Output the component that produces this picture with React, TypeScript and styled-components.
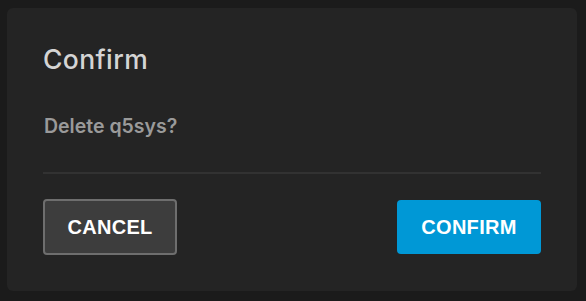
import React from 'react';
import styled, { createGlobalStyle } from 'styled-components';

const GlobalStyle = createGlobalStyle`
    html, body {
        margin: 0;
        padding: 0;
        background: #1b1b1b;
    }
    body {
        font-family: Inter, "Noto Sans", sans-serif;
    }
`

const Page = styled.div`
    width: 586px;
    height: 301px;
    padding: 8px 9px 10px 7px;
    box-sizing: border-box;
`

const Dialog = styled.div`
    width: 570px;
    height: 283px;
    box-sizing: border-box;
    background: #242424;
    border-radius: 6px;
    padding: 36px 36px 0 36px;
    display: flex;
    flex-direction: column;
`

const Title = styled.h2`
    margin: 0;
    font-size: 26.5px;
    line-height: 30px;
    font-weight: 500;
    color: #d4d4d4;
    letter-spacing: 0.4px;
`

const Message = styled.p`
    margin: 41px 0 0 1px;
    font-size: 19.5px;
    line-height: 22px;
    font-weight: 600;
    color: #9a9a9a;
`

const Divider = styled.hr`
    margin: 35px 0 0 0;
    border: none;
    height: 2px;
    background: #323232;
`

const Actions = styled.div`
    display: flex;
    justify-content: space-between;
    align-items: center;
    margin-top: 25px;
`

const Button = styled.button<{ $primary?: boolean }>`
    font-family: "Liberation Sans", Arial, sans-serif;
    font-size: 20px;
    font-weight: 700;
    letter-spacing: 0.3px;
    color: #ffffff;
    border-radius: 4px;
    cursor: pointer;
    box-sizing: border-box;
    width: ${p => p.$primary ? '144px' : '134px'};
    height: ${p => p.$primary ? '54px' : '56px'};
    background: ${p => p.$primary ? '#0098d6' : '#3d3d3d'};
    border: ${p => p.$primary ? 'none' : '2px solid #6e6e6e'};
`

export default function App() {
    return (
        <>
            <GlobalStyle />
            <Page>
                <Dialog>
                    <Title>Confirm</Title>
                    <Message>Delete q5sys?</Message>
                    <Divider />
                    <Actions>
                        <Button>CANCEL</Button>
                        <Button $primary>CONFIRM</Button>
                    </Actions>
                </Dialog>
            </Page>
        </>
    )
}
